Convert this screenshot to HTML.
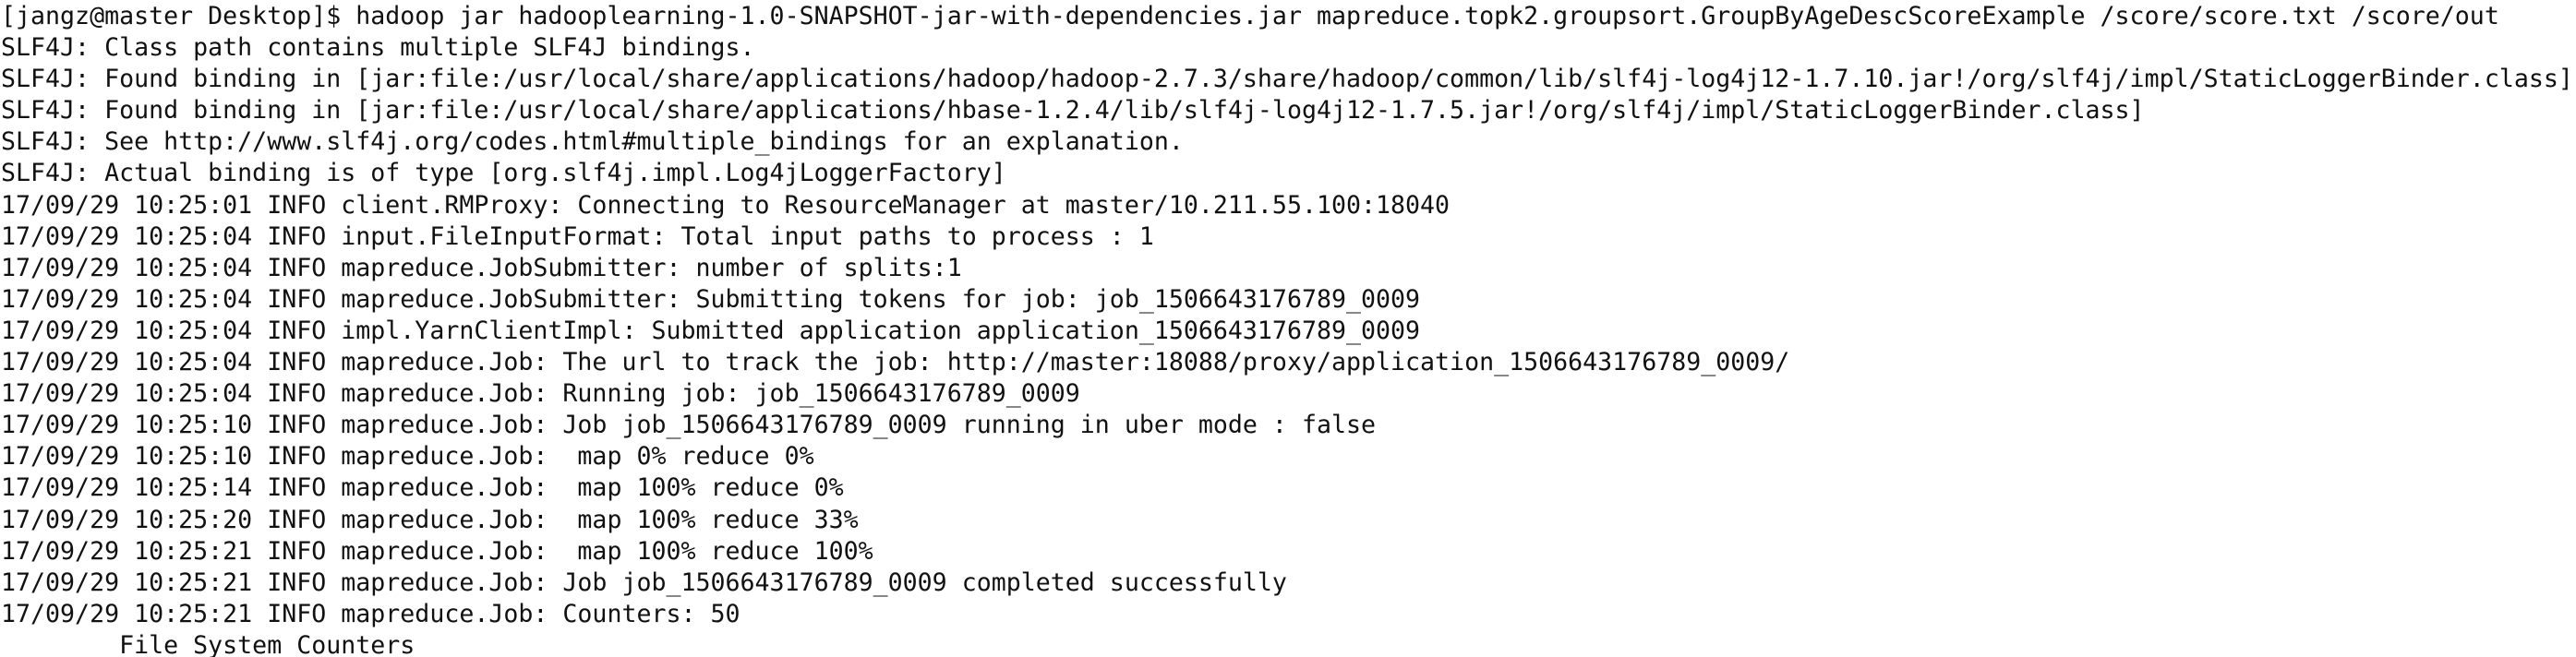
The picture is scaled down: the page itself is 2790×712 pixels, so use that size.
<!DOCTYPE html>
<html><head><meta charset="utf-8"><style>
html,body{margin:0;padding:0;background:#fff;width:2790px;height:712px;overflow:hidden}
pre{margin:0;padding:0 0 0 1px;font-family:"DejaVu Sans Mono","Liberation Mono",monospace;font-size:26.6px;line-height:34.1px;color:#111;white-space:pre;position:relative;top:1px}
</style></head><body><pre>[jangz@master Desktop]$ hadoop jar hadooplearning-1.0-SNAPSHOT-jar-with-dependencies.jar mapreduce.topk2.groupsort.GroupByAgeDescScoreExample /score/score.txt /score/out
SLF4J: Class path contains multiple SLF4J bindings.
SLF4J: Found binding in [jar:file:/usr/local/share/applications/hadoop/hadoop-2.7.3/share/hadoop/common/lib/slf4j-log4j12-1.7.10.jar!/org/slf4j/impl/StaticLoggerBinder.class]
SLF4J: Found binding in [jar:file:/usr/local/share/applications/hbase-1.2.4/lib/slf4j-log4j12-1.7.5.jar!/org/slf4j/impl/StaticLoggerBinder.class]
SLF4J: See http://www.slf4j.org/codes.html#multiple_bindings for an explanation.
SLF4J: Actual binding is of type [org.slf4j.impl.Log4jLoggerFactory]
17/09/29 10:25:01 INFO client.RMProxy: Connecting to ResourceManager at master/10.211.55.100:18040
17/09/29 10:25:04 INFO input.FileInputFormat: Total input paths to process : 1
17/09/29 10:25:04 INFO mapreduce.JobSubmitter: number of splits:1
17/09/29 10:25:04 INFO mapreduce.JobSubmitter: Submitting tokens for job: job_1506643176789_0009
17/09/29 10:25:04 INFO impl.YarnClientImpl: Submitted application application_1506643176789_0009
17/09/29 10:25:04 INFO mapreduce.Job: The url to track the job: http://master:18088/proxy/application_1506643176789_0009/
17/09/29 10:25:04 INFO mapreduce.Job: Running job: job_1506643176789_0009
17/09/29 10:25:10 INFO mapreduce.Job: Job job_1506643176789_0009 running in uber mode : false
17/09/29 10:25:10 INFO mapreduce.Job:  map 0% reduce 0%
17/09/29 10:25:14 INFO mapreduce.Job:  map 100% reduce 0%
17/09/29 10:25:20 INFO mapreduce.Job:  map 100% reduce 33%
17/09/29 10:25:21 INFO mapreduce.Job:  map 100% reduce 100%
17/09/29 10:25:21 INFO mapreduce.Job: Job job_1506643176789_0009 completed successfully
17/09/29 10:25:21 INFO mapreduce.Job: Counters: 50
        File System Counters</pre></body></html>
